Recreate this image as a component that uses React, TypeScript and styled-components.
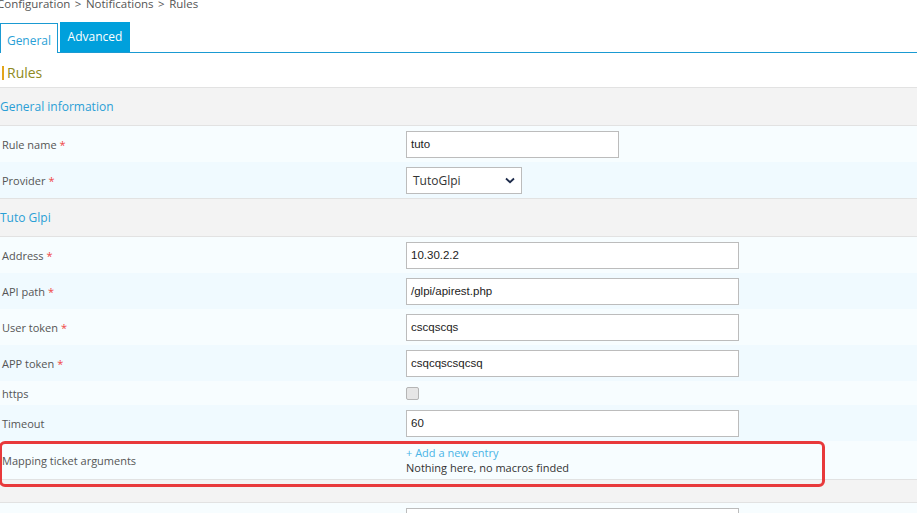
import styled, { createGlobalStyle } from 'styled-components';

const GlobalStyle = createGlobalStyle`
  html, body {
    margin: 0;
    padding: 0;
    background: #ffffff;
    font-family: 'Open Sans', 'DejaVu Sans', sans-serif;
    overflow: hidden;
  }
`;

const Page = styled.div`
  position: relative;
  margin-left: -3px;
  padding-top: 1px;
  width: calc(100% + 3px);
`;

const Breadcrumb = styled.div`
  font-size: 11.5px;
  line-height: 14px;
  color: #555555;
  margin-top: -4px;
  height: 14px;
  word-spacing: 1.5px;
`;

const Tabs = styled.div`
  display: flex;
  align-items: flex-end;
  margin-top: 11px;
  padding-left: 3px;
  height: 31px;
  border-bottom: 1px solid #1a9ad2;
  box-sizing: border-box;
`;

const Tab = styled.div<{ $active?: boolean }>`
  box-sizing: border-box;
  font-size: 12px;
  display: flex;
  align-items: center;
  justify-content: center;
  ${(p) =>
    p.$active
      ? `
    width: 58px;
    height: 30px;
    margin-bottom: -1px;
    background: #ffffff;
    color: #2a9fd6;
    border: 1px solid #1a9ad2;
    border-bottom: none;
    padding-top: 3px;
  `
      : `
    width: 70px;
    height: 30px;
    margin-left: 2px;
    background: #00a0dc;
    color: #ffffff;
    padding-bottom: 1px;
  `}
`;

const Heading = styled.div`
  display: flex;
  align-items: flex-end;
  box-sizing: border-box;
  height: 34px;
  padding: 0 0 5px 5px;
  font-size: 14px;
  color: #8f8a22;
`;

const HeadingBar = styled.span`
  display: inline-block;
  width: 2px;
  height: 14px;
  background: #e3a51a;
  margin-right: 3px;
  margin-bottom: 2px;
`;

const Section = styled.div<{ $h?: number }>`
  display: flex;
  align-items: center;
  height: ${(p) => p.$h ?? 37}px;
  padding-left: 3px;
  background: #f3f3f3;
  border-top: 1px solid #e2e2e2;
  border-bottom: 1px solid #e2e2e2;
  font-size: 12px;
  color: #2a9fd6;
`;

const Row = styled.div<{ $alt?: boolean; $h?: number }>`
  display: flex;
  align-items: center;
  height: ${(p) => p.$h ?? 36}px;
  background: ${(p) => (p.$alt ? '#f0faff' : '#f7fdff')};
`;

const Label = styled.div`
  width: 409px;
  flex-shrink: 0;
  box-sizing: border-box;
  padding-left: 5px;
  font-size: 11px;
  color: #555555;
`;

const Required = styled.span`
  color: #f04545;
  margin-left: 3px;
`;

const Field = styled.div`
  display: flex;
  flex-direction: column;
`;

const TextInput = styled.div<{ $w?: number }>`
  box-sizing: border-box;
  width: ${(p) => p.$w ?? 333}px;
  height: 27px;
  border: 1px solid #bcbcbc;
  background: #ffffff;
  padding-left: 4px;
  display: flex;
  align-items: center;
  font-family: 'Liberation Sans', Arial, sans-serif;
  font-size: 11.5px;
  color: #222222;
`;

const Select = styled.div`
  box-sizing: border-box;
  width: 116px;
  height: 27px;
  border: 1px solid #bcbcbc;
  background: #ffffff;
  padding: 0 6px 0 6px;
  display: flex;
  align-items: center;
  justify-content: space-between;
  font-size: 12px;
  color: #333333;
`;

const Checkbox = styled.div`
  width: 11px;
  height: 11px;
  border: 1px solid #b5b5b5;
  border-radius: 2px;
  background: #e6e6e6;
`;

const AddLink = styled.div`
  font-size: 11px;
  color: #4ab4e6;
  line-height: 15px;
`;

const Empty = styled.div`
  font-size: 11px;
  color: #333333;
  line-height: 15px;
`;

const Highlight = styled.div`
  position: absolute;
  left: 2px;
  top: 441px;
  width: 826px;
  height: 46px;
  border: 3px solid #e8393b;
  border-radius: 6px;
  box-sizing: border-box;
  pointer-events: none;
`;

function Chevron() {
  return (
    <svg width="10" height="7" viewBox="0 0 10 7">
      <path d="M1 1.5 L5 5.2 L9 1.5" fill="none" stroke="#1d2a4a" strokeWidth="1.8" />
    </svg>
  );
}

function FieldRow(props: { label: string; value: string; alt?: boolean; required?: boolean; w?: number }) {
  return (
    <Row $alt={props.alt}>
      <Label>
        {props.label}
        {props.required && <Required>*</Required>}
      </Label>
      <TextInput $w={props.w}>{props.value}</TextInput>
    </Row>
  );
}

export default function App() {
  return (
    <>
      <GlobalStyle />
      <Page>
        <Breadcrumb>Configuration &gt; Notifications &gt; Rules</Breadcrumb>
        <Tabs>
          <Tab $active>General</Tab>
          <Tab>Advanced</Tab>
        </Tabs>
        <Heading>
          <HeadingBar />
          Rules
        </Heading>
        <Section>General information</Section>
        <FieldRow label="Rule name" value="tuto" required w={213} />
        <Row $alt>
          <Label>
            Provider<Required>*</Required>
          </Label>
          <Select>
            TutoGlpi
            <Chevron />
          </Select>
        </Row>
        <Section>Tuto Glpi</Section>
        <FieldRow label="Address" value="10.30.2.2" required />
        <FieldRow label="API path" value="/glpi/apirest.php" required alt />
        <FieldRow label="User token" value="cscqscqs" required />
        <FieldRow label="APP token" value="csqcqscsqcsq" required alt />
        <Row $h={24}>
          <Label>https</Label>
          <Checkbox />
        </Row>
        <FieldRow label="Timeout" value="60" alt />
        <Row $h={38}>
          <Label>Mapping ticket arguments</Label>
          <Field>
            <AddLink>+ Add a new entry</AddLink>
            <Empty>Nothing here, no macros finded</Empty>
          </Field>
        </Row>
        <Section $h={22} />
        <FieldRow label="" value="" />
        <Highlight />
      </Page>
    </>
  );
}
